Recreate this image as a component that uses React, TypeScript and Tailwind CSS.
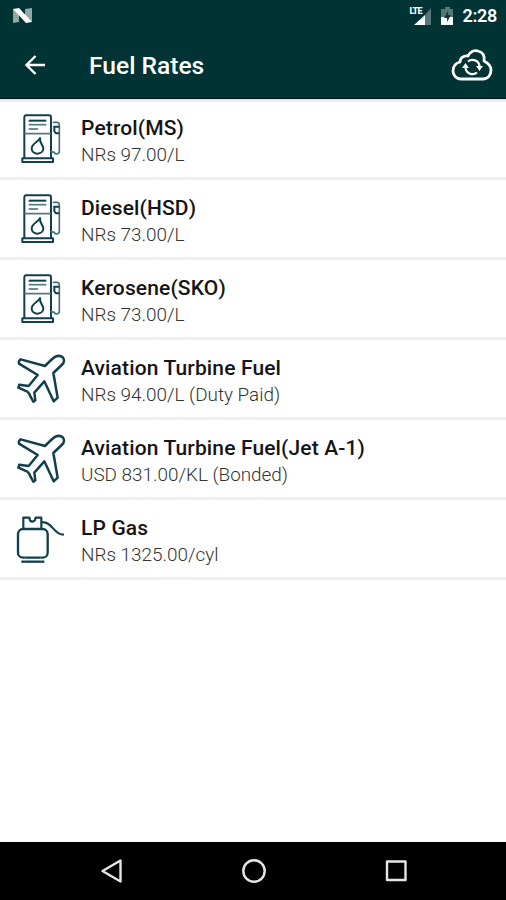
import React from 'react';

type IconKind = 'pump' | 'plane' | 'cylinder';

interface FuelRate {
  name: string;
  rate: string;
  icon: IconKind;
}

const FUEL_RATES: FuelRate[] = [
  { name: 'Petrol(MS)', rate: 'NRs 97.00/L', icon: 'pump' },
  { name: 'Diesel(HSD)', rate: 'NRs 73.00/L', icon: 'pump' },
  { name: 'Kerosene(SKO)', rate: 'NRs 73.00/L', icon: 'pump' },
  { name: 'Aviation Turbine Fuel', rate: 'NRs 94.00/L (Duty Paid)', icon: 'plane' },
  { name: 'Aviation Turbine Fuel(Jet A-1)', rate: 'USD 831.00/KL (Bonded)', icon: 'plane' },
  { name: 'LP Gas', rate: 'NRs 1325.00/cyl', icon: 'cylinder' },
];

const PumpIcon = () => (
  <>
    <path d="M73 174V52q0-6 6-6h68q6 0 6 6v122" strokeWidth="6" />
    <path d="M67 175h92v11H67z" strokeWidth="6" />
    <path d="M76 101h75" strokeWidth="5" stroke="#55777e" />
    <path d="M86 62h53" strokeWidth="6" strokeLinecap="butt" />
    <path d="M86 74h53" strokeWidth="5" stroke="#55777e" strokeLinecap="butt" />
    <path d="M86 87h28" strokeWidth="5" stroke="#55777e" strokeLinecap="butt" />
    <path d="M120 114c-3 10-25 17-25 31 0 10 8 16 17 16 11 0 18-7 18-16 0-10-11-13-10-31z" strokeWidth="6" />
    <path d="M160 67h11q7 0 7 8v78q0 8-8 9-7 0-7-5l-9-2" strokeWidth="5" stroke="#48717a" />
    <path d="M162 80h13M163 80v14l5 6h8" strokeWidth="6" />
  </>
);

const PlaneIcon = () => (
  <path
    d="M62 58q-7 5-5 13l56 34-27 33-28-4-3 9 27 12q7 5 8 12l10 18 6-4-3-23 30-34 28 60 12-11-13-74 25-24q12-12 4-22-9-9-23-3-8 5-31 28z"
    strokeWidth="7.500"
  />
);

const CylinderIcon = () => (
  <>
    <rect x="54" y="87" width="89" height="86" rx="15" strokeWidth="7" />
    <path d="M70 86V53h18q1 12 9 12t10-12h17v33" strokeWidth="6.500" />
    <path d="M64 185h69" strokeWidth="7" strokeLinecap="butt" />
    <path d="M126 67h7c24 2 28 35 56 37" strokeWidth="6.500" />
    <path d="M76 172v12M122 172v12" strokeWidth="1" stroke="#b6c5c9" />
  </>
);

const FuelIcon: React.FC<{ kind: IconKind }> = ({ kind }) => (
  <svg
    viewBox="30 27 180 180"
    fill="none"
    stroke="#123f4c"
    strokeLinecap="round"
    strokeLinejoin="round"
    className="h-[60px] w-[60px] shrink-0"
  >
    {kind === 'pump' && <PumpIcon />}
    {kind === 'plane' && <PlaneIcon />}
    {kind === 'cylinder' && <CylinderIcon />}
  </svg>
);

const StatusBar = () => (
  <div className="flex h-8 items-center justify-between pl-3 pr-[9px]">
    <svg viewBox="0 0 20 16" className="h-4 w-5">
      <path d="M1 1l6 4v9l-6 1z" fill="#91a8a9" />
      <path d="M13 1l7-1v14l-7-4z" fill="#91a8a9" />
      <path d="M1 1l6-1 13 14-6 1z" fill="#fff" />
    </svg>
    <div className="flex items-center">
      <div className="relative h-[18px] w-[23px]">
        <span className="absolute left-0 top-0 font-['Roboto'] text-[9px] font-extrabold leading-[9px] tracking-[-0.8px] text-white">LTE</span>
        <svg viewBox="0 0 23 18" className="h-[18px] w-[23px]">
          <path d="M16 8l6-7v17h-6z" fill="#55777a" />
          <path d="M5 18L16 8v10z" fill="#fff" />
        </svg>
      </div>
      <svg viewBox="0 0 12 18" className="ml-[9px] h-[18px] w-3">
        <path d="M4 0h5v2h3v8H0V2h4z" fill="#55777a" />
        <path d="M0 10h12v8H0z" fill="#fff" />
        <path d="M7 4L3 11h3v4l4-7H7z" fill="#103c3d" />
      </svg>
      <span className="ml-[9px] font-['Roboto'] text-[18px] font-semibold leading-none tracking-[-0.3px] text-white">2:28</span>
    </div>
  </div>
);

const Toolbar = () => (
  <div className="flex h-[66px] items-center pl-6 pr-[13px]">
    <svg viewBox="0 0 22 22" fill="none" stroke="#fff" strokeWidth="2.4" className="h-[22px] w-[22px]">
      <path d="M21 11H3M11.500 2L2.500 11l9 9" />
    </svg>
    <h1 className="ml-[43px] pt-px font-['Roboto'] text-[24.6px] font-medium leading-8 text-white">Fuel Rates</h1>
    <svg viewBox="0 0 42 34" fill="none" stroke="#fff" className="ml-auto h-[34px] w-[42px]">
      <path
        d="M10 31C5 31 2 27 2 23c0-5 3-8 7-9 0-4 4-7 8-6 2-4 6-6 10-5 5 1 7 5 6 10 4 2 7 5 7 9 0 5-3 9-8 9z"
        strokeWidth="2.800"
        strokeLinejoin="round"
      />
      <path d="M17 13.500a7 7 0 0 1 11.500 5.500M26 24.500a7 7 0 0 1-11.500-5.500" strokeWidth="2.200" />
      <path d="M25 18h7l-3.500 5zM11 20h7l-3.500-5z" fill="#fff" stroke="none" />
    </svg>
  </div>
);

const NavigationBar = () => (
  <nav className="flex h-[58px] items-center justify-between bg-black pl-[100px] pr-[98px]">
    <svg viewBox="0 0 24 26" fill="none" stroke="#e6e6e6" strokeWidth="2.400" strokeLinejoin="round" className="h-[26px] w-6">
      <path d="M20.500 2.500v21L2.500 13z" />
    </svg>
    <svg viewBox="0 0 26 26" fill="none" stroke="#e6e6e6" strokeWidth="2.400" className="h-[26px] w-[26px]">
      <circle cx="13" cy="13" r="10.700" />
    </svg>
    <svg viewBox="0 0 24 24" fill="none" stroke="#e6e6e6" strokeWidth="2.400" strokeLinejoin="round" className="h-6 w-6">
      <rect x="3" y="2.500" width="18.500" height="18.500" />
    </svg>
  </nav>
);

const App: React.FC = () => {
  return (
    <div className="flex h-[900px] w-[506px] flex-col overflow-hidden bg-white">
      <header className="h-[99px] shrink-0 border-b border-[#09181b] bg-[#003333]">
        <StatusBar />
        <Toolbar />
      </header>

      <main className="flex-1">
        <div className="h-1 bg-linear-to-b from-[#e0dbe4] to-white" />
        <ul className="-mt-[3px]">
          {FUEL_RATES.map((fuel) => (
            <li key={fuel.name} className="flex h-20 items-center border-b-[3px] border-[#f0f0f0] pl-2.5">
              <FuelIcon kind={fuel.icon} />
              <div className="ml-[11px] pt-1.5 font-['Roboto']">
                <div className="text-[21px] font-medium leading-[27px] tracking-[0.14px] text-[#151515]">{fuel.name}</div>
                <div className="text-[18.9px] font-light leading-[26px] text-[#333333]">{fuel.rate}</div>
              </div>
            </li>
          ))}
        </ul>
      </main>

      <NavigationBar />
    </div>
  );
};

export default App;
